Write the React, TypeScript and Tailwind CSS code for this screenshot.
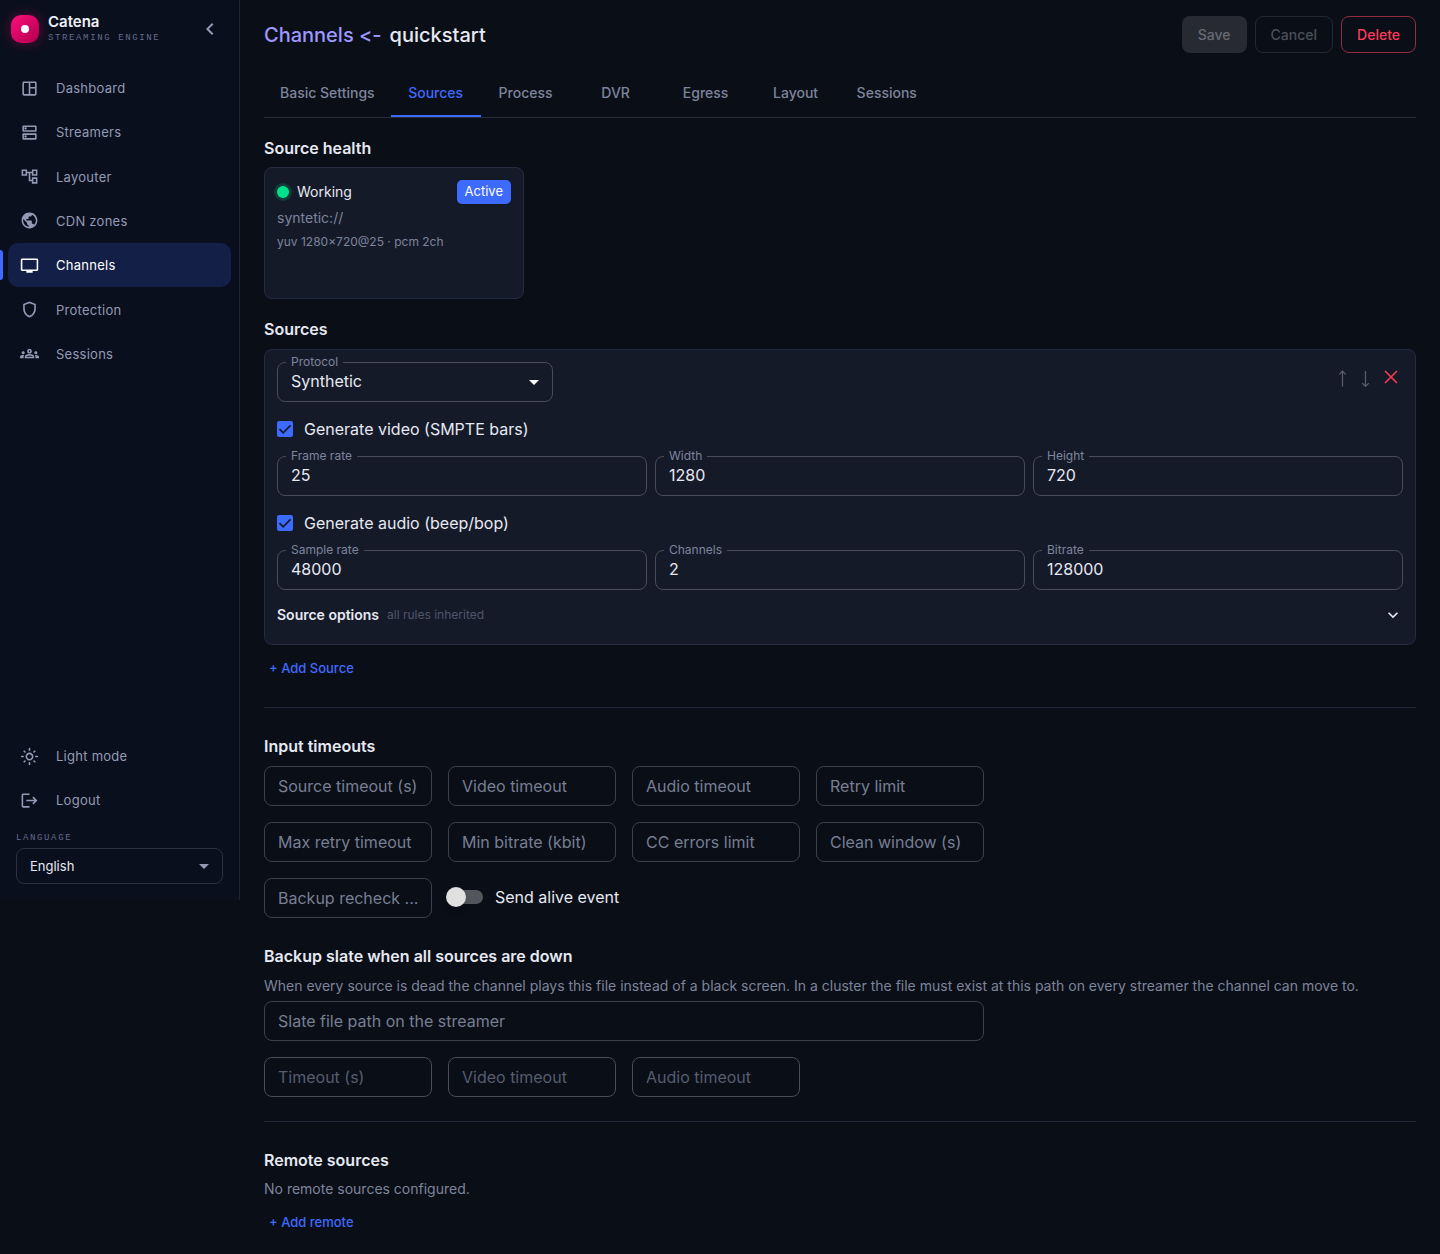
import React, { useState } from 'react';
import {
  MdArrowDropDown,
  MdChevronLeft,
  MdExpandMore,
  MdLogout,
  MdOutlineAccountTree,
  MdOutlineDns,
  MdOutlineGroups,
  MdOutlineLightMode,
  MdOutlineShield,
  MdOutlineSpaceDashboard,
  MdPublic,
  MdTv,
} from 'react-icons/md';

const navItems = [
  { label: 'Dashboard', icon: MdOutlineSpaceDashboard },
  { label: 'Streamers', icon: MdOutlineDns },
  { label: 'Layouter', icon: MdOutlineAccountTree },
  { label: 'CDN zones', icon: MdPublic },
  { label: 'Channels', icon: MdTv },
  { label: 'Protection', icon: MdOutlineShield },
  { label: 'Sessions', icon: MdOutlineGroups },
];

const tabs = ['Basic Settings', 'Sources', 'Process', 'DVR', 'Egress', 'Layout', 'Sessions'];

const timeoutFields = [
  'Source timeout (s)',
  'Video timeout',
  'Audio timeout',
  'Retry limit',
  'Max retry timeout',
  'Min bitrate (kbit)',
  'CC errors limit',
  'Clean window (s)',
  'Backup recheck ...',
];

function Sidebar() {
  return (
    <aside className="flex flex-col shrink-0 w-60 h-[900px] bg-[#0a0f1e] border-r border-[#1f2433] text-[#939bb4]">
      <div className="flex items-center h-[58px] pl-[11px] pr-[17px]">
        <div className="flex items-center justify-center w-7 h-7 rounded-[10px] bg-linear-to-br from-[#ff0f7b] to-[#b0004e] shadow-[0_0_12px_rgba(255,0,110,0.35)]">
          <span className="w-2 h-2 rounded-full bg-white" />
        </div>
        <div className="ml-[9px] flex-1">
          <div className="text-[15px] leading-[18px] font-semibold text-[#eef1f8]">Catena</div>
          <div className="font-['Liberation_Mono',monospace] text-[9px] leading-[14px] tracking-[0.18em] text-[#656c8a]">STREAMING ENGINE</div>
        </div>
        <button aria-label="Collapse sidebar"><MdChevronLeft size={24} /></button>
      </div>

      <nav className="flex flex-col h-[310px] mt-2 px-2">
        {navItems.map(({ label, icon: Icon }) => (
          label === 'Channels' ? (
            <a key={label} href="#" aria-current="page" className="relative flex flex-1 items-center gap-[17px] px-3 rounded-[10px] bg-[#141f48] text-white text-[13px] leading-5 tracking-[0.02em]">
              <span className="absolute -left-2 top-[7px] w-[3px] h-[30px] rounded-r bg-[#3d6bff]" />
              <Icon size={19} />
              {label}
            </a>
          ) : (
            <a key={label} href="#" className="flex flex-1 items-center gap-[17px] px-3 rounded-[10px] text-[13px] leading-5 tracking-[0.02em] hover:bg-white/5">
              <Icon size={19} />
              {label}
            </a>
          )
        ))}
      </nav>

      <div className="mt-auto px-2">
        <button className="flex items-center gap-[17px] w-full h-11 px-3 text-[13px] leading-5 tracking-[0.02em]">
          <MdOutlineLightMode size={19} />
          Light mode
        </button>
        <button className="flex items-center gap-[17px] w-full h-11 px-3 text-[13px] leading-5 tracking-[0.02em]">
          <MdLogout size={19} />
          Logout
        </button>
      </div>

      <div className="px-4 pt-[9px] pb-4">
        <label htmlFor="language" className="block font-['Liberation_Mono',monospace] text-[9px] leading-[14px] tracking-[0.18em] text-[#656c8a]">LANGUAGE</label>
        <div className="relative mt-[3px]">
          <select id="language" className="appearance-none w-full h-9 px-[13px] pt-0.5 rounded-lg border border-[#2b3042] bg-transparent text-[13px] text-[#e6e9f2]">
            <option>English</option>
          </select>
          <MdArrowDropDown size={24} className="absolute right-[7px] top-1.5 pointer-events-none" />
        </div>
      </div>
    </aside>
  );
}

function LabeledInput({ id, label, value }: { id: string, label: string, value: string }) {
  return (
    <div className="relative flex-1">
      <label htmlFor={id} className="absolute left-[9px] -top-2 px-[5px] bg-[#151a29] text-xs leading-4 text-[#7d859b]">{label}</label>
      <input id={id} defaultValue={value} className="w-full h-10 px-[13px] pb-0.5 rounded-lg border border-[#484b58] bg-transparent text-base text-[#e6e9f2]" />
    </div>
  );
}

function Field({ label, disabled = false }: { label: string, disabled?: boolean }) {
  return (
    <input
      placeholder={label}
      aria-label={label}
      disabled={disabled}
      className="w-full h-10 pl-[13px] pr-1 rounded-lg border border-[#3e414b] bg-transparent text-base text-ellipsis text-[#e6e9f2] placeholder:text-[#777f93] disabled:border-[#4a4d57] disabled:placeholder:text-[#565d70]"
    />
  );
}

function Check({ label }: { label: string }) {
  return (
    <label className="flex items-center gap-[11px] h-6 text-base">
      <span className="grid">
        <input type="checkbox" defaultChecked className="peer col-start-1 row-start-1 appearance-none w-4 h-4 rounded-xs border-2 border-[#7d859b] checked:border-[#3d6bff] checked:bg-[#3d6bff]" />
        <svg viewBox="0 0 16 16" className="col-start-1 row-start-1 w-4 h-4 pointer-events-none invisible peer-checked:visible" fill="none" stroke="#151a29" strokeWidth="1.7">
          <path d="M2.5 8.200l3.700 3.700 7.300-7.600" />
        </svg>
      </span>
      {label}
    </label>
  );
}

function SourceHealth() {
  return (
    <section className="pt-[18px]">
      <h2 className="text-base leading-6 font-semibold">Source health</h2>
      <div className="mt-[7px] w-[260px] h-[132px] p-3 rounded-lg border border-[#252c42] bg-[#151a29]">
        <div className="flex items-center h-6">
          <span className="w-3 h-3 rounded-full bg-[#00e08a] ring-[3px] ring-[#0f3b38]" />
          <span className="ml-2 flex-1 text-sm">Working</span>
          <span className="h-6 px-2 rounded-[5px] bg-[#3d6bff] text-[13px] leading-[23px] text-white">Active</span>
        </div>
        <div className="mt-1 text-sm leading-5 text-[#7d859b]">syntetic://</div>
        <div className="mt-1 text-xs leading-5 text-[#7d859b]">yuv 1280×720@25 · pcm 2ch</div>
      </div>
    </section>
  );
}

function SourceCard() {
  return (
    <div className="mt-2 p-3 h-[296px] rounded-lg border border-[#252c42] bg-[#151a29]">
      <div className="flex items-start justify-between">
        <div className="relative w-[276px]">
          <label htmlFor="protocol" className="absolute left-[9px] -top-2 px-[5px] bg-[#151a29] text-xs leading-4 text-[#7d859b]">Protocol</label>
          <select id="protocol" className="appearance-none w-full h-10 px-[13px] pb-0.5 rounded-lg border border-[#484b58] bg-transparent text-base text-[#e6e9f2]">
            <option>Synthetic</option>
          </select>
          <MdArrowDropDown size={24} className="absolute right-[7px] top-2 pointer-events-none text-white" />
        </div>
        <div className="flex pt-[7px]">
          <button aria-label="Move up" disabled className="flex w-[23px] h-5 justify-center text-[#5c606c]">
            <svg className="w-3 h-5" viewBox="0 0 12 20" fill="none" stroke="currentColor" strokeWidth="1.200"><path d="M6.500 2v15.500M3.200 5.300l3.300-3.300 3.300 3.300" /></svg>
          </button>
          <button aria-label="Move down" disabled className="flex w-[23px] h-5 justify-center text-[#5c606c]">
            <svg className="w-3 h-5" viewBox="0 0 12 20" fill="none" stroke="currentColor" strokeWidth="1.200"><path d="M6.500 2v15.500M3.200 14.200l3.300 3.300 3.300-3.300" /></svg>
          </button>
          <button aria-label="Remove source" className="flex w-6 h-5 ml-[3px] justify-center text-[#ff3b52]">
            <svg className="w-4 h-4" viewBox="0 0 16 16" fill="none" stroke="currentColor" strokeWidth="1.500"><path d="M2 2l12 12M14 2L2 14" /></svg>
          </button>
        </div>
      </div>

      <div className="mt-[15px]"><Check label="Generate video (SMPTE bars)" /></div>
      <div className="flex gap-2 mt-[15px]">
        <LabeledInput id="frame-rate" label="Frame rate" value="25" />
        <LabeledInput id="width" label="Width" value="1280" />
        <LabeledInput id="height" label="Height" value="720" />
      </div>

      <div className="mt-[15px]"><Check label="Generate audio (beep/bop)" /></div>
      <div className="flex gap-2 mt-[15px]">
        <LabeledInput id="sample-rate" label="Sample rate" value="48000" />
        <LabeledInput id="channels" label="Channels" value="2" />
        <LabeledInput id="bitrate" label="Bitrate" value="128000" />
      </div>

      <button className="flex items-center gap-2 w-full mt-[13px] h-6">
        <span className="text-sm font-semibold">Source options</span>
        <span className="text-xs text-[#4f566a]">all rules inherited</span>
        <MdExpandMore size={20} className="ml-auto" />
      </button>
    </div>
  );
}

export default function App() {
  const [alive, setAlive] = useState(false);

  return (
    <div className="flex items-start min-h-screen bg-[#0a0e17] font-[Inter,sans-serif] text-[#e6e9f2]">
      <Sidebar />
      <main className="flex-1 min-w-0 px-6 pt-4 pb-4">
        <header className="flex items-center h-[37px]">
          <h1 className="flex gap-2 flex-1 text-xl font-medium [font-feature-settings:'calt'_0]">
            <a href="#" className="text-[#9d97ff]">Channels &lt;-</a>
            <span>quickstart</span>
          </h1>
          <div className="flex gap-2 text-sm font-medium">
            <button disabled className="h-[37px] px-4 rounded-lg bg-[#272a32] text-[#686b73]">Save</button>
            <button disabled className="h-[37px] px-[15px] rounded-lg border border-[#242831] text-[#4c505a]">Cancel</button>
            <button className="h-[37px] px-[15px] rounded-lg border border-[#922c3f] text-[#ff3b5c]">Delete</button>
          </div>
        </header>

        <div role="tablist" className="flex mt-4 border-b border-[#262b3a]">
          {tabs.map(tab => (
            <button
              key={tab}
              role="tab"
              aria-selected={tab === 'Sources'}
              className="min-w-[90px] h-12 px-4 text-sm font-medium text-[#7d859b] border-b-2 border-transparent pt-0.5 aria-selected:text-[#3d6bff] aria-selected:border-[#3d6bff]"
            >
              {tab}
            </button>
          ))}
        </div>

        <SourceHealth />

        <section className="pt-[18px] pb-6 border-b border-[#232838]">
          <h2 className="text-base leading-6 font-semibold">Sources</h2>
          <SourceCard />
          <button className="mt-2.5 px-[5px] h-7 text-[13px] font-medium text-[#3d6bff]">+ Add Source</button>
        </section>

        <section className="pt-[26px]">
          <h2 className="text-base leading-6 font-semibold">Input timeouts</h2>
          <div className="grid grid-cols-4 gap-4 mt-2 max-w-[720px]">
            {timeoutFields.map(name => <Field key={name} label={name} />)}
            <label className="col-span-2 flex items-center gap-3 h-[38px] -ml-0.5 text-base">
              <span className="relative flex items-center w-[37px] h-5">
                <input
                  type="checkbox"
                  role="switch"
                  checked={alive}
                  onChange={e => setAlive(e.target.checked)}
                  className="peer appearance-none w-[34px] h-3.5 ml-[3px] rounded-full bg-[#54565d] checked:bg-[#3d6bff]"
                />
                <span className="absolute left-0 w-5 h-5 rounded-full bg-[#e0e0e0] shadow-md pointer-events-none peer-checked:left-[17px]" />
              </span>
              Send alive event
            </label>
          </div>
        </section>

        <section className="pt-[26px] pb-6 border-b border-[#232838]">
          <h2 className="text-base leading-6 font-semibold">Backup slate when all sources are down</h2>
          <p className="mt-2 mb-[5px] text-sm leading-5 text-[#7d859b]">
            When every source is dead the channel plays this file instead of a black screen. In a cluster the file must exist at this path on every streamer the channel can move to.
          </p>
          <div className="max-w-[720px]"><Field label="Slate file path on the streamer" /></div>
          <div className="grid grid-cols-4 gap-4 mt-4 max-w-[720px]">
            <Field label="Timeout (s)" disabled />
            <Field label="Video timeout" disabled />
            <Field label="Audio timeout" disabled />
          </div>
        </section>

        <section className="pt-[26px]">
          <h2 className="text-base leading-6 font-semibold">Remote sources</h2>
          <p className="mt-[7px] text-sm leading-5 text-[#7d859b]">No remote sources configured.</p>
          <button className="mt-2.5 px-[5px] h-7 text-[13px] font-medium text-[#3d6bff]">+ Add remote</button>
        </section>
      </main>
    </div>
  );
}
